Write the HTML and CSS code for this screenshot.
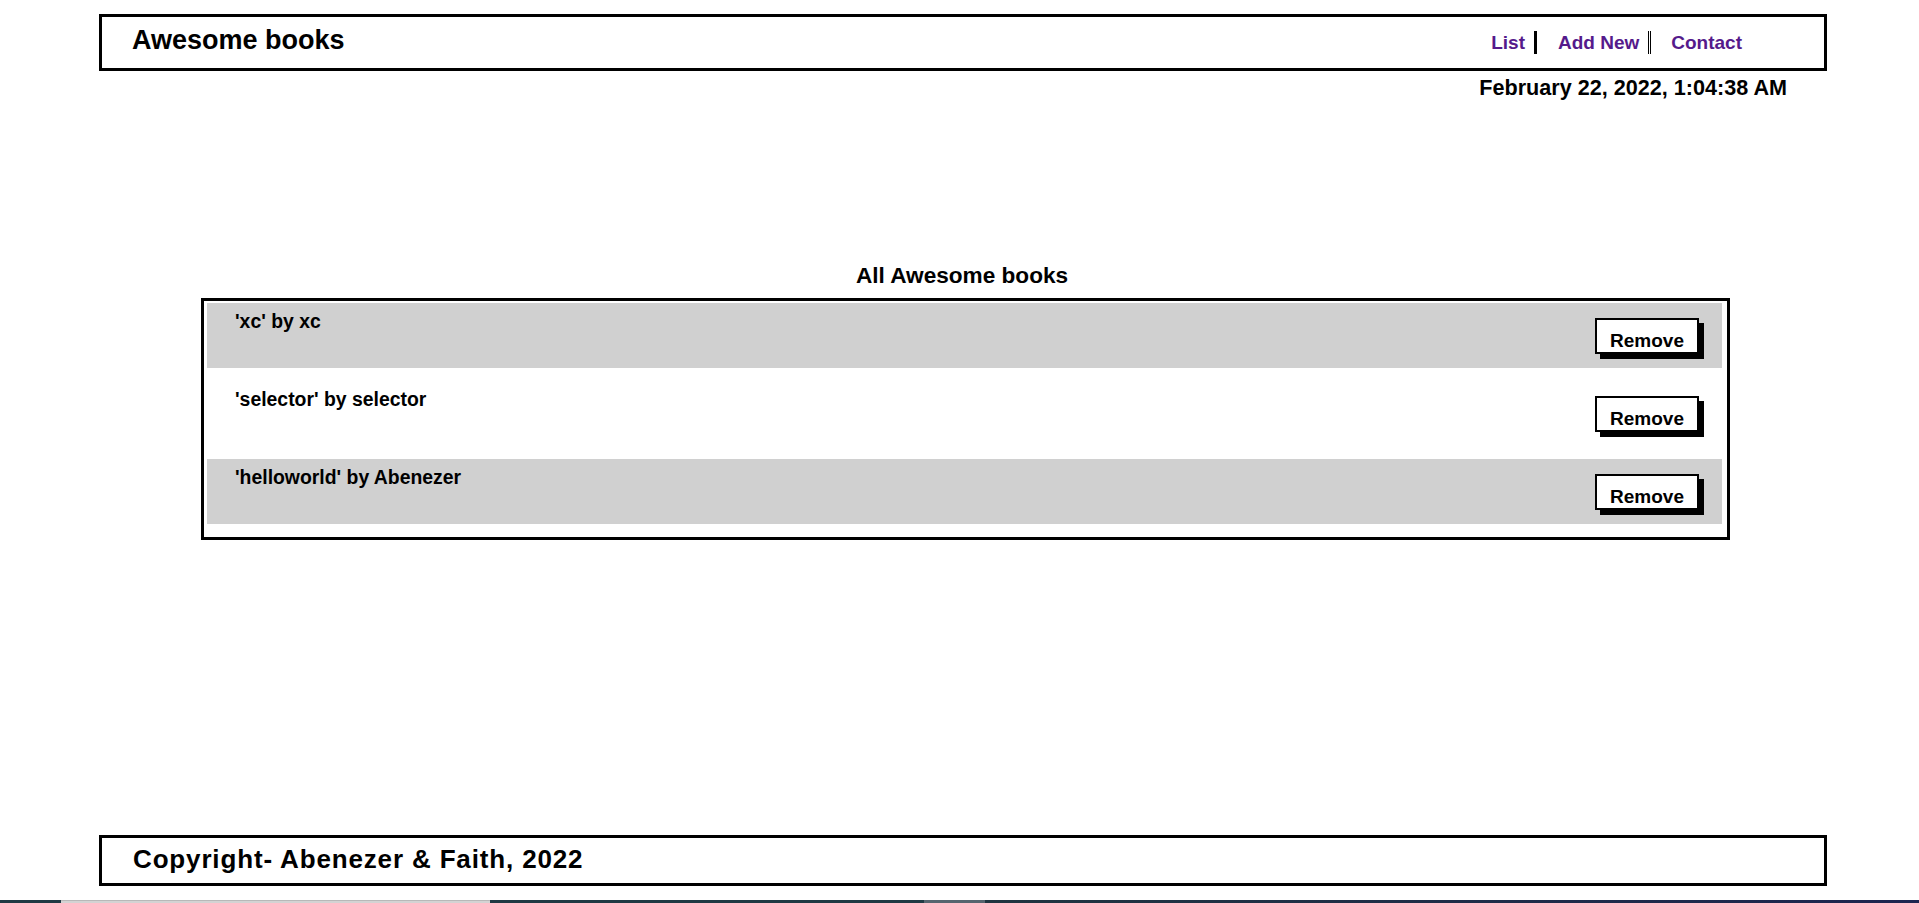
FILE: index.html
```html
<!DOCTYPE html>
<html lang="en">
<head>
<meta charset="utf-8">
<title>Awesome books</title>
<link rel="stylesheet" href="styles.css">
</head>
<body>
<header class="top">
  <h1 class="brand">Awesome books</h1>
  <nav>
    <ul class="nav">
      <li class="nav-item sep-solid"><a href="#list">List</a></li>
      <li class="nav-item sep-double"><a href="#add">Add New</a></li>
      <li class="nav-item"><a href="#contact">Contact</a></li>
    </ul>
  </nav>
</header>
<p class="date">February 22, 2022, 1:04:38 AM</p>
<main class="content">
  <h2 class="section-title">All Awesome books</h2>
  <ul class="books">
    <li class="book"><span class="book-title">'xc' by xc</span><button class="remove">Remove</button></li>
    <li class="book"><span class="book-title">'selector' by selector</span><button class="remove">Remove</button></li>
    <li class="book"><span class="book-title">'helloworld' by Abenezer</span><button class="remove">Remove</button></li>
  </ul>
</main>
<footer class="bottom"><p class="copy">Copyright- Abenezer &amp; Faith, 2022</p></footer>
<div class="taskbar">
  <span class="seg seg-a"></span>
  <span class="seg seg-b"></span>
  <span class="seg seg-c"></span>
  <span class="seg seg-d"></span>
  <span class="seg seg-e"></span>
</div>
</body>
</html>
```
FILE: styles.css
```css
* { box-sizing: border-box; }
html, body { margin: 0; padding: 0; }
body {
  height: 903px;
  display: flex;
  flex-direction: column;
  font-family: "Liberation Sans", Arial, sans-serif;
  font-weight: bold;
  color: #000;
  background: #fff;
  overflow: hidden;
}
.top {
  margin: 14px 92px 0 99px;
  height: 57px;
  border: 3px solid #000;
  display: flex;
  justify-content: space-between;
  align-items: baseline;
  padding: 8px 73px 0 30px;
}
.brand {
  margin: 0;
  font-size: 27px;
  line-height: 31px;
}
.nav {
  display: flex;
  list-style: none;
  margin: 0;
  padding: 0;
}
.nav-item {
  font-size: 19px;
  line-height: 23px;
  padding: 0 9px 0 20px;
}
.nav-item:first-child { padding-left: 0; }
.sep-solid { border-right: 3px solid #000; }
.sep-double { border-right: 3px double #000; padding-left: 21px; }
.nav-item a { color: #551a8b; text-decoration: none; }
.date {
  margin: 4px 132px 0 0;
  text-align: right;
  font-size: 21.6px;
  line-height: 25px;
}
.content { display: flex; flex-direction: column; }
.section-title {
  margin: 163px 189px 9px 201px;
  padding-right: 7px;
  text-align: center;
  font-size: 22.6px;
  line-height: 26px;
}
.books {
  list-style: none;
  margin: 0 189px 0 201px;
  border: 3px solid #000;
  padding: 2px 5px 0 3px;
}
.book {
  height: 65px;
  margin-bottom: 13px;
  display: flex;
  justify-content: space-between;
  align-items: flex-start;
  padding: 0 23px 0 28px;
}
.book:nth-child(odd) { background: #d0d0d0; }
.book-title {
  padding-top: 7px;
  font-size: 19.4px;
  line-height: 22px;
}
.remove {
  margin-top: 15px;
  height: 36px;
  border: 2px solid #000;
  background: #fff;
  box-shadow: 5px 5px 0 #000;
  font-family: "Liberation Sans", Arial, sans-serif;
  font-weight: bold;
  font-size: 19px;
  line-height: 22px;
  padding: 10px 13px 0 13px;
  color: #000;
}
.bottom {
  margin: auto 92px 14px 99px;
  height: 51px;
  border: 3px solid #000;
  padding: 6px 0 0 31px;
}
.copy {
  margin: 0;
  font-size: 26px;
  line-height: 30px;
  letter-spacing: 0.85px;
}
.taskbar {
  height: 3px;
  display: flex;
  flex-shrink: 0;
}
.seg { display: block; height: 3px; }
.seg-a { width: 61px; background: #1f3a44; }
.seg-b { width: 429px; background: #d3d3d3; border-top: 1px solid #b8b8b8; }
.seg-c { width: 434px; background: #1f3a44; }
.seg-d { width: 61px; background: #56656f; }
.seg-e { flex: 1; background: linear-gradient(to right, #1f3540, #1d2550); }
```
